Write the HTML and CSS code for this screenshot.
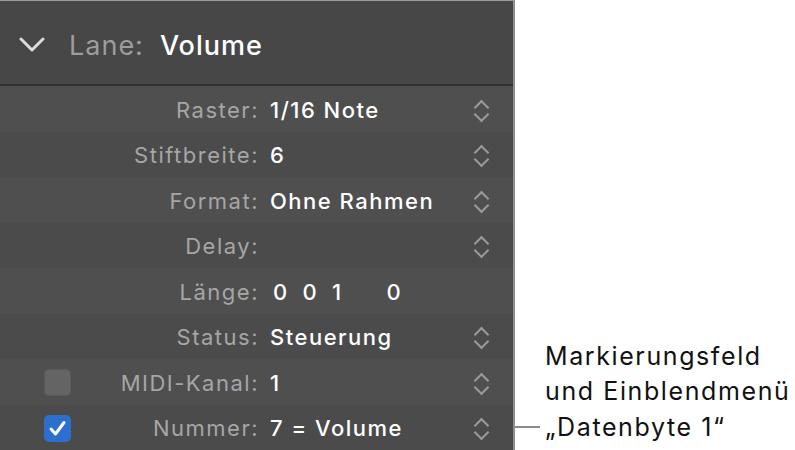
FILE: index.html
```html
<!DOCTYPE html>
<html lang="de">
<head>
    <meta charset="UTF-8">
    <title>Lane: Volume</title>
    <link rel="stylesheet" href="styles.css">
</head>
<body>
    <div class="page">
        <div class="panel">
            <div class="header">
                <svg class="disclosure" width="26" height="16" viewBox="0 0 26 16">
                    <path d="M2 2 L13 13 L24 2" fill="none" stroke="#dcdcdc" stroke-width="3" stroke-linecap="round" stroke-linejoin="round"/>
                </svg>
                <span class="header-label">Lane:</span>
                <span class="header-value">Volume</span>
            </div>

            <div class="rows">
                <div class="row">
                    <div class="check-slot"></div>
                    <div class="label">Raster:</div>
                    <div class="value">1/16 Note</div>
                    <div class="stepper"></div>
                </div>
                <div class="row">
                    <div class="check-slot"></div>
                    <div class="label">Stiftbreite:</div>
                    <div class="value">6</div>
                    <div class="stepper"></div>
                </div>
                <div class="row">
                    <div class="check-slot"></div>
                    <div class="label">Format:</div>
                    <div class="value">Ohne Rahmen</div>
                    <div class="stepper"></div>
                </div>
                <div class="row">
                    <div class="check-slot"></div>
                    <div class="label">Delay:</div>
                    <div class="value"></div>
                    <div class="stepper"></div>
                </div>
                <div class="row">
                    <div class="check-slot"></div>
                    <div class="label">Länge:</div>
                    <div class="value length">
                        <span class="seg">0</span><span class="seg">0</span><span class="seg">1</span><span class="seg wide">0</span>
                    </div>
                    <div class="stepper none"></div>
                </div>
                <div class="row">
                    <div class="check-slot"></div>
                    <div class="label">Status:</div>
                    <div class="value">Steuerung</div>
                    <div class="stepper"></div>
                </div>
                <div class="row">
                    <div class="check-slot"><span class="checkbox"></span></div>
                    <div class="label">MIDI-Kanal:</div>
                    <div class="value">1</div>
                    <div class="stepper"></div>
                </div>
                <div class="row">
                    <div class="check-slot">
                        <span class="checkbox checked">
                            <svg width="27" height="27" viewBox="0 0 27 27">
                                <path d="M7 14 L11.5 19 L20 7.5" fill="none" stroke="#fff" stroke-width="3" stroke-linecap="round" stroke-linejoin="round"/>
                            </svg>
                        </span>
                    </div>
                    <div class="label">Nummer:</div>
                    <div class="value">7 = Volume</div>
                    <div class="stepper"></div>
                </div>
            </div>
        </div>

        <div class="callout">
            <div class="callout-text">
                <div class="callout-line">Markierungsfeld</div>
                <div class="callout-line">und Einblendmenü</div>
                <div class="callout-line last"><span class="leader"></span>„Datenbyte 1“</div>
            </div>
        </div>
    </div>
</body>
</html>
```

FILE: styles.css
```css
body {
    margin: 0;
    background-color: #fff;
    font-family: Inter, 'Liberation Sans', sans-serif;
}
.page {
    display: flex;
    width: 795px;
    height: 450px;
    overflow: hidden;
}
.panel {
    width: 515px;
    height: 450px;
    display: flex;
    flex-direction: column;
    background-color: #4d4d4d;
    border-right: 2px solid #8e8e8e;
    border-top: 1px solid #9a9a9a;
    box-sizing: border-box;
}
.header {
    height: 85px;
    display: flex;
    align-items: center;
    background-color: #474747;
    border-bottom: 2px solid #2f2f2f;
    padding-left: 19px;
    box-sizing: border-box;
}
.disclosure {
    margin-right: 24px;
    margin-top: 4px;
}
.header-label {
    font-size: 27px;
    letter-spacing: 1px;
    color: #9d9d9d;
    margin-right: 16px;
    margin-top: 5px;
}
.header-value {
    font-size: 27px;
    letter-spacing: 1px;
    font-weight: 500;
    color: #fff;
    margin-top: 5px;
}
.rows {
    flex: 1;
    display: grid;
    grid-template-rows: repeat(8, 1fr);
}
.row {
    display: flex;
    align-items: center;
    font-size: 22px;
    letter-spacing: 1.5px;
    padding-top: 2px;
}
.row:nth-child(odd) {
    background-color: #4f4f4f;
}
.row:nth-child(even) {
    background-color: #4b4b4b;
}
.check-slot {
    width: 71px;
    padding-left: 44px;
    box-sizing: border-box;
    display: flex;
    align-items: center;
}
.checkbox {
    display: block;
    width: 27px;
    height: 27px;
    border-radius: 5px;
    background-color: #646464;
    box-shadow: inset 0 0 0 1px #5a5a5a;
}
.checkbox.checked {
    background-color: #2d6fcd;
    box-shadow: none;
}
.checkbox svg {
    display: block;
}
.label {
    width: 188px;
    text-align: right;
    color: #a6a6a6;
}
.value {
    flex: 1;
    margin-left: 11px;
    color: #fff;
    font-weight: 500;
}
.length {
    display: flex;
    padding-left: 3px;
}
.seg {
    width: 29.5px;
}
.seg.wide {
    margin-left: 25px;
}
.stepper {
    width: 18px;
    height: 24px;
    margin-right: 23px;
    position: relative;
}
.stepper::before,
.stepper::after {
    content: "";
    position: absolute;
    left: 4px;
    width: 9px;
    height: 9px;
    border-color: #9b9b9b;
    border-style: solid;
    border-width: 2px 0 0 2px;
}
.stepper::before {
    top: 4px;
    transform: rotate(45deg);
}
.stepper::after {
    top: 11px;
    transform: rotate(225deg);
}
.stepper.none::before,
.stepper.none::after {
    display: none;
}
.callout {
    flex: 1;
    display: flex;
    align-items: flex-end;
}
.callout-text {
    padding-bottom: 5px;
    font-size: 25px;
    letter-spacing: 1.6px;
    color: #111;
}
.callout-line {
    height: 35.5px;
    line-height: 35.5px;
    padding-left: 30px;
    white-space: nowrap;
}
.callout-line.last {
    display: flex;
    align-items: center;
    padding-left: 0;
}
.leader {
    width: 25px;
    height: 2px;
    background-color: #8a8a8a;
    margin-right: 5px;
}
```
